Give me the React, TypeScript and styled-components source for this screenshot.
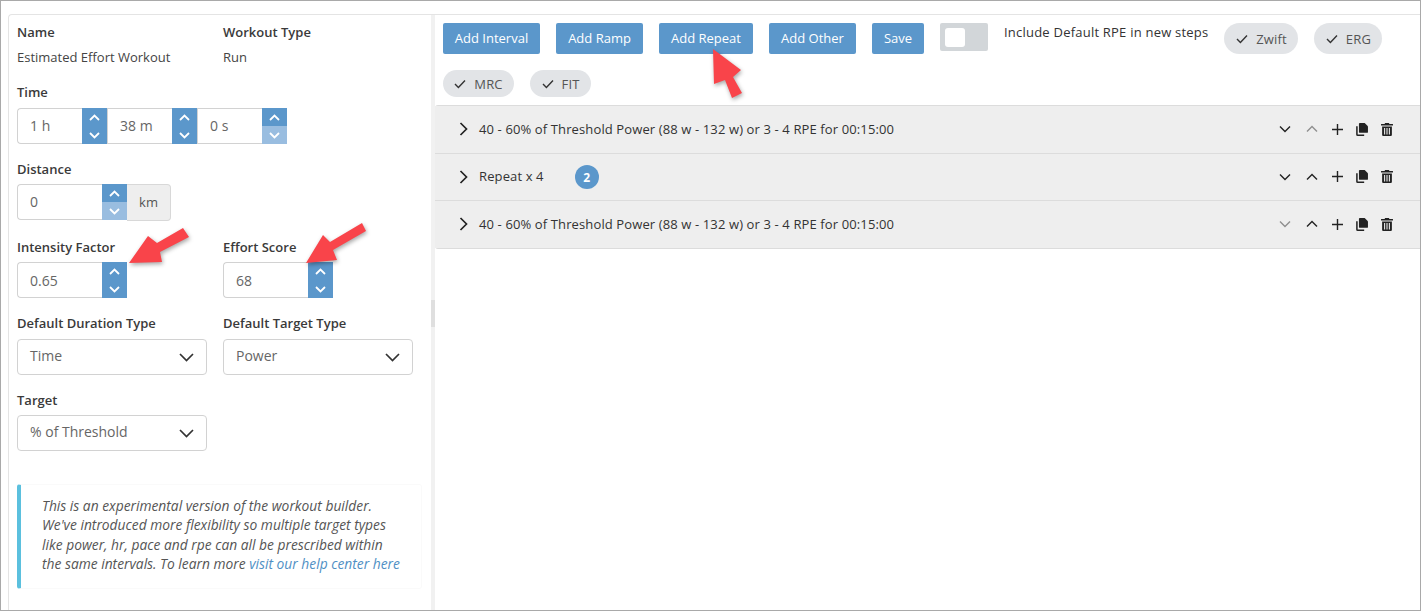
import React from "react";
import styled, { createGlobalStyle } from "styled-components";

const Global = createGlobalStyle`
  html, body { margin: 0; padding: 0; background: #fff; }
  * { box-sizing: border-box; }
  body { font-family: "Open Sans", "Liberation Sans", sans-serif; font-size: 13px; color: #333; }
`;

const Frame = styled.div`
  position: relative;
  width: 1421px;
  height: 611px;
  overflow: hidden;
  border: 1px solid #a9a9a9;
  padding: 13px 0 0 7px;
  background: #fff;
`;
const Body = styled.div`
  display: flex;
  height: 100%;
  border-top: 1px solid #e4e4e4;
  border-left: 1px solid #e4e4e4;
  border-top-left-radius: 4px;
`;
const LeftPanel = styled.aside`
  width: 422px;
  flex: none;
  padding: 7px 8px 0 8px;
`;
const Divider = styled.div`
  width: 4px;
  flex: none;
  background: #f1f1f1;
  display: flex;
  flex-direction: column;
  padding-top: 285px;
`;
const Handle = styled.div`
  height: 27px;
  background: #dfdfdf;
`;
const RightPanel = styled.main`
  flex: 1;
  min-width: 0;
`;
const Row = styled.div<{ $top?: number }>`
  display: flex;
  gap: 16px;
  margin-top: ${(p) => p.$top ?? 0}px;
`;
const Field = styled.div`
  width: 190px;
`;
const Label = styled.div<{ $gap?: number }>`
  height: 20px;
  line-height: 20px;
  font-size: 13px;
  font-weight: 600;
  color: #3a3a3a;
  margin-bottom: ${(p) => p.$gap ?? 5}px;
`;
const Plain = styled.div`
  height: 20px;
  line-height: 20px;
  font-size: 13px;
  color: #444;
`;
const Group = styled.div`
  display: flex;
  height: 36px;
`;
const NumberBox = styled.div<{ $w: number; $round?: boolean; $low?: boolean }>`
  width: ${(p) => p.$w}px;
  height: 100%;
  border: 1px solid #d2d2d2;
  border-right: none;
  border-radius: ${(p) => (p.$round ? "4px 0 0 4px" : "0")};
  padding-left: 12px;
  padding-top: ${(p) => (p.$low ? 1 : 0)}px;
  line-height: 34px;
  font-size: 14px;
  color: #666;
  background: #fff;
`;
const Spin = styled.div`
  width: 25px;
  height: 100%;
  display: flex;
  flex-direction: column;
`;
const SpinPart = styled.div<{ $off?: boolean }>`
  flex: 1;
  background: ${(p) => (p.$off ? "#99bde0" : "#5b97cb")};
  display: flex;
  align-items: center;
  justify-content: center;
`;
const Addon = styled.div`
  width: 44px;
  height: 37px;
  background: #eeeeee;
  border: 1px solid #d8d8d8;
  border-left: none;
  border-radius: 0 4px 4px 0;
  line-height: 34px;
  text-align: center;
  font-size: 13px;
  color: #555;
`;
const Select = styled.div`
  width: 190px;
  height: 36px;
  border: 1px solid #d2d2d2;
  border-radius: 4px;
  padding: 0 12px;
  display: flex;
  align-items: center;
  justify-content: space-between;
  font-size: 14px;
  color: #666;
`;
const SelectText = styled.span`
  margin-top: -3px;
`;
const Callout = styled.div`
  margin-top: 33px;
  width: 405px;
  height: 105px;
  border: 1px solid #fafafa;
  border-left: 4px solid #5bc0de;
  border-radius: 3px;
  padding: 11px 0 0 21px;
  font-size: 13.8px;
  font-style: italic;
  line-height: 19.4px;
  white-space: nowrap;
  color: #555;
`;
const HelpLink = styled.span`
  color: #4f8fc4;
`;
const Toolbar = styled.div`
  display: flex;
  flex-wrap: wrap;
  gap: 16px;
  padding: 8px;
`;
const ActionButton = styled.div<{ $w: number }>`
  width: ${(p) => p.$w}px;
  height: 31px;
  line-height: 31px;
  text-align: center;
  background: #5b97cb;
  color: #fff;
  font-size: 13px;
  border-radius: 2px;
`;
const ToggleTrack = styled.div`
  width: 48px;
  height: 28px;
  background: #d2d6d9;
  border-radius: 2px;
  padding: 5px;
`;
const ToggleKnob = styled.div`
  width: 20px;
  height: 19px;
  background: #fff;
  border-radius: 3px;
`;
const ToggleLabel = styled.div`
  line-height: 18px;
  font-size: 13px;
  letter-spacing: 0.22px;
  color: #333;
`;
const Chip = styled.div<{ $w: number }>`
  width: ${(p) => p.$w}px;
  border-radius: 16px;
  background: #e2e4e7;
  color: #555;
  font-size: 13px;
  letter-spacing: 0.15px;
  display: flex;
  align-items: center;
  justify-content: center;
  gap: 8px;
  min-height: 27px;
`;
const Accordion = styled.div`
  border-top: 1px solid #dcdcdc;
  border-bottom: 1px solid #dcdcdc;
  border-radius: 3px 0 0 3px;
`;
const StepRow = styled.div<{ $h: number; $last?: boolean }>`
  height: ${(p) => p.$h}px;
  background: #eeeeee;
  display: flex;
  align-items: center;
  padding-left: 24px;
  padding-right: 24px;
  border-bottom: ${(p) => (p.$last ? "none" : "1px solid #dcdcdc")};
  font-size: 13px;
  color: #333;
`;
const StepChevron = styled.span`
  display: flex;
  width: 20px;
  flex: none;
  margin-top: -1px;
`;
const StepTitle = styled.span`
  flex: none;
  letter-spacing: 0.12px;
  margin-top: -2px;
`;
const CountBadge = styled.span`
  width: 24px;
  height: 24px;
  border-radius: 50%;
  background: #5b97cb;
  color: #fff;
  font-size: 12px;
  font-weight: 700;
  display: flex;
  align-items: center;
  justify-content: center;
  margin-left: 31px;
`;
const Actions = styled.div`
  margin-left: auto;
  display: flex;
  align-items: center;
  gap: 7px;
  margin-top: -1px;
`;
const ActionIcon = styled.span<{ $dim?: boolean; $extra?: number }>`
  display: flex;
  width: 18px;
  justify-content: center;
  color: ${(p) => (p.$dim ? "#8f8f8f" : "#222")};
  margin-right: ${(p) => p.$extra ?? 0}px;
`;
const ArrowOverlay = styled.svg<{ $x: number; $y: number }>`
  position: absolute;
  left: ${(p) => p.$x}px;
  top: ${(p) => p.$y}px;
  overflow: visible;
  filter: drop-shadow(1px 2px 2px rgba(0, 0, 0, 0.35));
`;

const Up = () => (
  <svg width="11" height="7" viewBox="0 0 11 7"><path d="M1 6l4.5-4.5L10 6" fill="none" stroke="#fff" strokeWidth="1.8" /></svg>
);
const Down = () => (
  <svg width="11" height="7" viewBox="0 0 11 7"><path d="M1 1l4.5 4.5L10 1" fill="none" stroke="#fff" strokeWidth="1.8" /></svg>
);
const Spinner = ({ off }: { off?: boolean }) => (
  <Spin>
    <SpinPart><Up /></SpinPart>
    <SpinPart $off={off}><Down /></SpinPart>
  </Spin>
);
const SelectChevron = () => (
  <svg width="15" height="9" viewBox="0 0 15 9"><path d="M1 1l6.5 6.5L14 1" fill="none" stroke="#333" strokeWidth="1.7" /></svg>
);
const Check = () => (
  <svg width="12" height="10" viewBox="0 0 12 10"><path d="M1 5l3.4 3.4L11 1.5" fill="none" stroke="#333" strokeWidth="1.4" /></svg>
);
const RightChevron = () => (
  <svg width="9" height="14" viewBox="0 0 9 14"><path d="M1.5 1l6 6-6 6" fill="none" stroke="#222" strokeWidth="1.7" /></svg>
);
const ChevDown = () => (
  <svg width="12" height="8" viewBox="0 0 12 8"><path d="M1 1.5l5 5 5-5" fill="none" stroke="currentColor" strokeWidth="1.4" /></svg>
);
const ChevUp = () => (
  <svg width="12" height="8" viewBox="0 0 12 8"><path d="M1 6.5l5-5 5 5" fill="none" stroke="currentColor" strokeWidth="1.4" /></svg>
);
const Plus = () => (
  <svg width="11" height="11" viewBox="0 0 11 11"><path d="M5.5 0v11M0 5.5h11" fill="none" stroke="currentColor" strokeWidth="1.4" /></svg>
);
const Copy = () => (
  <svg width="12" height="13" viewBox="0 0 11 12">
    <path d="M3.5 0H8l3 3v5.2a.8.8 0 0 1-.8.8H3.5a.8.8 0 0 1-.8-.8V.8a.8.8 0 0 1 .8-.8z" fill="currentColor" />
    <path d="M.8 3v7.6c0 .4.3.7.7.7H7.5" fill="none" stroke="currentColor" strokeWidth="1.4" />
  </svg>
);
const Trash = () => (
  <svg width="12" height="13" viewBox="0 0 11 12" fill="currentColor">
    <path d="M3.5 0h4v1H11v1.3H0V1h3.5z" />
    <path d="M1 3.2h9v7.8a1 1 0 0 1-1 1H2a1 1 0 0 1-1-1zM2.8 4.5v6h1v-6zm2.2 0v6h1v-6zm2.2 0v6h1v-6z" fillRule="evenodd" />
  </svg>
);

const StepActions = ({ upDim, downDim }: { upDim?: boolean; downDim?: boolean }) => (
  <Actions>
    <ActionIcon $dim={downDim} $extra={2}><ChevDown /></ActionIcon>
    <ActionIcon $dim={upDim}><ChevUp /></ActionIcon>
    <ActionIcon><Plus /></ActionIcon>
    <ActionIcon><Copy /></ActionIcon>
    <ActionIcon><Trash /></ActionIcon>
  </Actions>
);

const RedArrow = ({ x, y, d }: { x: number; y: number; d: string }) => (
  <ArrowOverlay $x={x} $y={y} width="70" height="60" viewBox="0 0 70 60">
    <path d={d} fill="#f9444a" />
  </ArrowOverlay>
);

const TITLE = "40 - 60% of Threshold Power (88 w - 132 w) or 3 - 4 RPE for 00:15:00";

export default function App() {
  return (
    <Frame>
      <Global />
      <Body>
        <LeftPanel>
          <Row>
            <Field><Label>Name</Label><Plain>Estimated Effort Workout</Plain></Field>
            <Field><Label>Workout Type</Label><Plain>Run</Plain></Field>
          </Row>
          <Row $top={15}>
            <div>
              <Label $gap={6}>Time</Label>
              <Group>
                <NumberBox $w={65} $round>1 h</NumberBox><Spinner />
                <NumberBox $w={65}>38 m</NumberBox><Spinner />
                <NumberBox $w={65}>0 s</NumberBox><Spinner off />
              </Group>
            </div>
          </Row>
          <Row $top={15}>
            <div>
              <Label>Distance</Label>
              <Group>
                <NumberBox $w={85} $round>0</NumberBox><Spinner off />
                <Addon>km</Addon>
              </Group>
            </div>
          </Row>
          <Row $top={17}>
            <Field>
              <Label>Intensity Factor</Label>
              <Group><NumberBox $w={85} $round $low>0.65</NumberBox><Spinner /></Group>
            </Field>
            <Field>
              <Label>Effort Score</Label>
              <Group><NumberBox $w={85} $round $low>68</NumberBox><Spinner /></Group>
            </Field>
          </Row>
          <Row $top={15}>
            <Field>
              <Label $gap={6}>Default Duration Type</Label>
              <Select><SelectText>Time</SelectText><SelectChevron /></Select>
            </Field>
            <Field>
              <Label $gap={6}>Default Target Type</Label>
              <Select><SelectText>Power</SelectText><SelectChevron /></Select>
            </Field>
          </Row>
          <Row $top={15}>
            <Field>
              <Label>Target</Label>
              <Select><SelectText>% of Threshold</SelectText><SelectChevron /></Select>
            </Field>
          </Row>
          <Callout>
            This is an experimental version of the workout builder.<br />
            We've introduced more flexibility so multiple target types<br />
            like power, hr, pace and rpe can all be prescribed within<br />
            the same intervals. To learn more <HelpLink>visit our help center here</HelpLink>
          </Callout>
        </LeftPanel>
        <Divider><Handle /></Divider>
        <RightPanel>
          <Toolbar>
            <ActionButton $w={97}>Add Interval</ActionButton>
            <ActionButton $w={87}>Add Ramp</ActionButton>
            <ActionButton $w={94}>Add Repeat</ActionButton>
            <ActionButton $w={87}>Add Other</ActionButton>
            <ActionButton $w={52}>Save</ActionButton>
            <ToggleTrack><ToggleKnob /></ToggleTrack>
            <ToggleLabel>Include Default RPE in new steps</ToggleLabel>
            <Chip $w={74}><Check />Zwift</Chip>
            <Chip $w={68}><Check />ERG</Chip>
            <Chip $w={71}><Check />MRC</Chip>
            <Chip $w={61}><Check />FIT</Chip>
          </Toolbar>
          <Accordion>
            <StepRow $h={48}>
              <StepChevron><RightChevron /></StepChevron>
              <StepTitle>{TITLE}</StepTitle>
              <StepActions upDim />
            </StepRow>
            <StepRow $h={47}>
              <StepChevron><RightChevron /></StepChevron>
              <StepTitle>Repeat x 4</StepTitle>
              <CountBadge>2</CountBadge>
              <StepActions />
            </StepRow>
            <StepRow $h={47} $last>
              <StepChevron><RightChevron /></StepChevron>
              <StepTitle>{TITLE}</StepTitle>
              <StepActions downDim />
            </StepRow>
          </Accordion>
        </RightPanel>
      </Body>
      <RedArrow x={128} y={225} d="M0 37L19 10L28 17L54 2L60 11L31 26L33 36Z" />
      <RedArrow x={305} y={222} d="M0 40L17 12L24 19L56 0L60 8L27 27L31 37Z" />
      <RedArrow x={712} y={48} d="M0 0L28 21L20 28L29 44L19 49L12 31L1 35Z" />
    </Frame>
  );
}
